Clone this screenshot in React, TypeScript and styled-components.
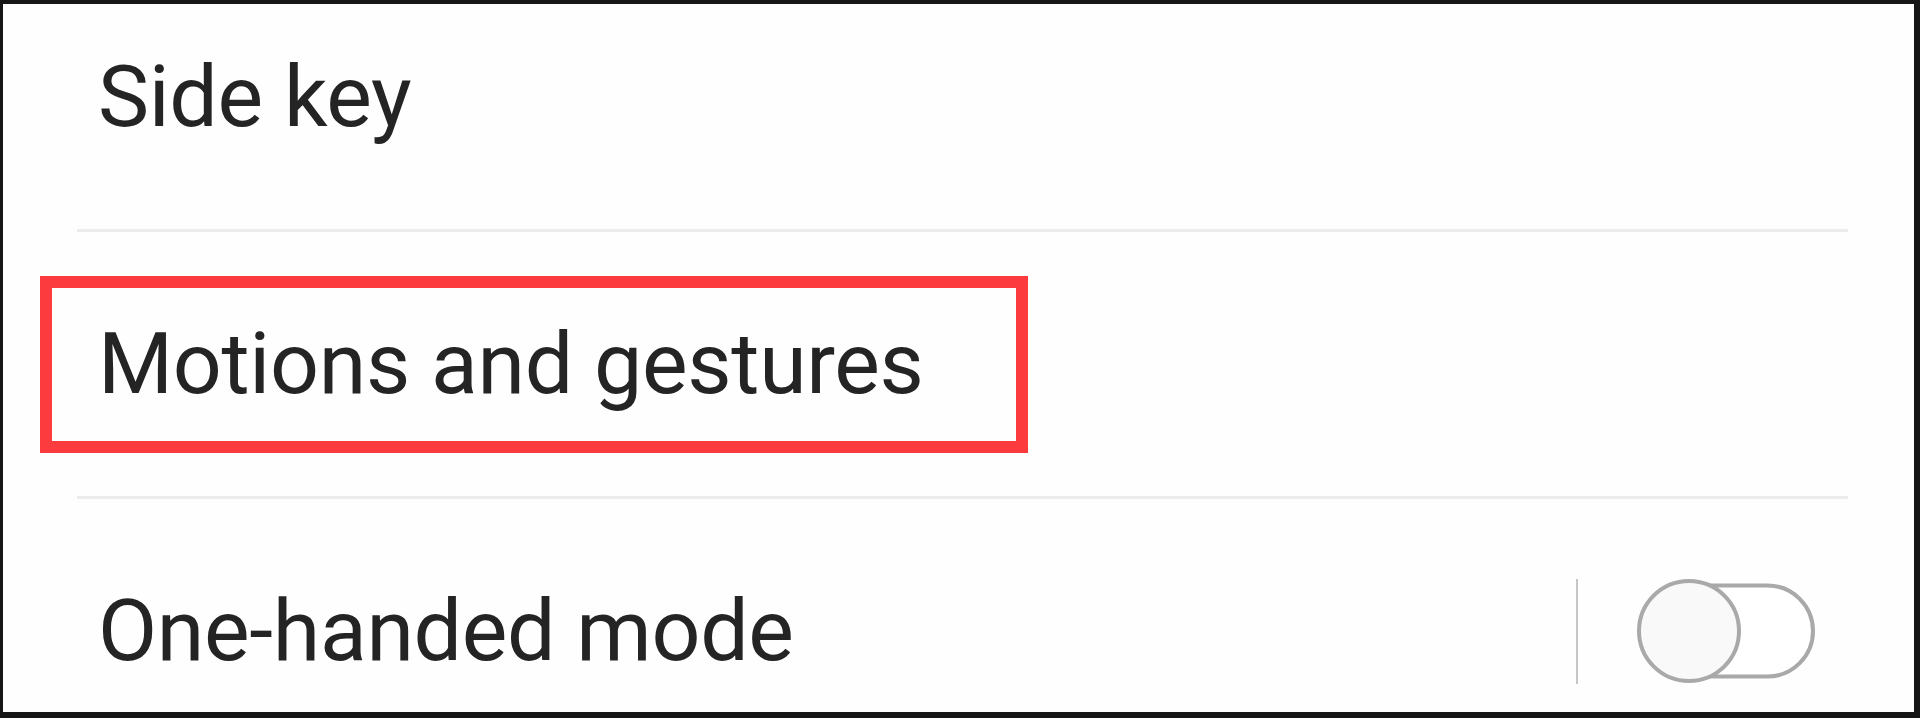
import React from "react";
import styled, { createGlobalStyle } from "styled-components";

const GlobalStyle = createGlobalStyle`
  html, body {
    margin: 0;
    padding: 0;
    background: #ffffff;
  }
  body {
    font-family: Roboto, "Liberation Sans", sans-serif;
  }
`;

const Frame = styled.div`
  box-sizing: border-box;
  width: 1920px;
  height: 718px;
  border-style: solid;
  border-color: #161616;
  border-width: 4px 6px 6px 3px;
  background: #fefefe;
  overflow: hidden;
`;

const List = styled.div`
  display: flex;
  flex-direction: column;
  margin-top: -39px;
`;

const Row = styled.div`
  position: relative;
  box-sizing: border-box;
  display: flex;
  align-items: center;
  height: 264px;
  padding: 0 99px 0 95px;
`;

const Label = styled.span`
  flex: 1;
  font-size: 86px;
  letter-spacing: -0.3px;
  line-height: 1;
  color: #242424;
  white-space: nowrap;
`;

const Divider = styled.div`
  height: 3px;
  margin: 0 66px 0 74px;
  background: #ececec;
`;

const Highlight = styled.div`
  position: absolute;
  left: 37px;
  top: 44px;
  width: 988px;
  height: 177px;
  box-sizing: border-box;
  border: 12px solid #fb3b3e;
  pointer-events: none;
`;

const Trailing = styled.div`
  display: flex;
  align-items: center;
  gap: 59px;
`;

const VSep = styled.div`
  width: 2px;
  height: 105px;
  background: #c6c6c6;
`;

const Switch = styled.div`
  position: relative;
  width: 178px;
  height: 104px;
`;

const Track = styled.div`
  position: absolute;
  right: 0;
  top: 50%;
  transform: translateY(-50%);
  box-sizing: border-box;
  width: 172px;
  height: 95px;
  border: 4px solid #a9a9a9;
  border-radius: 48px;
  background: #ffffff;
`;

const Thumb = styled.div`
  position: absolute;
  left: 0;
  top: 0;
  box-sizing: border-box;
  width: 104px;
  height: 104px;
  border-radius: 50%;
  border: 4px solid #a9a9a9;
  background: #f9f9f9;
`;

export default function App() {
  return (
    <>
      <GlobalStyle />
      <Frame>
        <List>
          <Row>
            <Label>Side key</Label>
          </Row>
          <Divider />
          <Row>
            <Label>Motions and gestures</Label>
            <Highlight />
          </Row>
          <Divider />
          <Row>
            <Label>One-handed mode</Label>
            <Trailing>
              <VSep />
              <Switch>
                <Track />
                <Thumb />
              </Switch>
            </Trailing>
          </Row>
        </List>
      </Frame>
    </>
  );
}
